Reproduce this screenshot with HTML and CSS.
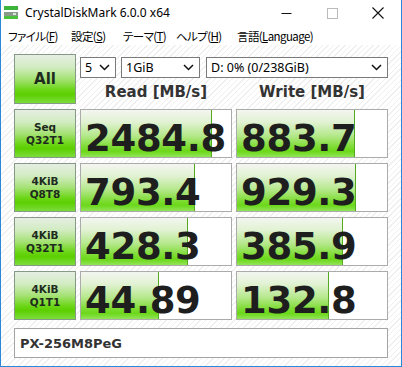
FILE: index.html
```html
<!DOCTYPE html>
<html>
<head>
<meta charset="utf-8">
<link rel="stylesheet" href="styles.css">
</head>
<body>
<div class="window">
  <div class="titlebar">
    <svg class="appicon" width="14" height="13" viewBox="0 0 14 13">
      <rect x="0" y="0" width="14" height="4" fill="#3cb43c"/>
      <rect x="0" y="6" width="14" height="7" fill="#8a9a8a"/>
      <rect x="0" y="10" width="14" height="3" fill="#4cc23c"/>
      <rect x="9" y="7" width="3" height="2" fill="#d8e8d8"/>
    </svg>
    <span class="title">CrystalDiskMark 6.0.0 x64</span>
    <span class="spacer"></span>
    <span class="ctl"><svg width="11" height="11" viewBox="0 0 11 11"><line x1="0.5" y1="5.5" x2="10.5" y2="5.5" stroke="#111" stroke-width="1"/></svg></span>
    <span class="ctl"><svg width="11" height="11" viewBox="0 0 11 11"><rect x="0.5" y="0.5" width="10" height="10" fill="none" stroke="#bbb" stroke-width="1"/></svg></span>
    <span class="ctl"><svg width="12" height="12" viewBox="0 0 12 12"><path d="M0.5 0.5 L11.5 11.5 M11.5 0.5 L0.5 11.5" stroke="#111" stroke-width="1.1"/></svg></span>
  </div>
  <div class="menubar">
    <span class="mi m1">ファイル(<u>F</u>)</span>
    <span class="mi m2">設定(<u>S</u>)</span>
    <span class="mi m3">テーマ(<u>T</u>)</span>
    <span class="mi m4">ヘルプ(<u>H</u>)</span>
    <span class="mi">言語(<u>L</u>anguage)</span>
  </div>
  <div class="content">
    <div class="grid">
      <div class="allbtn">All</div>
      <div class="topctl">
        <div class="selects">
          <div class="sel s1"><span>5</span><svg width="11" height="7" viewBox="0 0 11 7"><polyline points="1,1 5.5,5.5 10,1" fill="none" stroke="#111" stroke-width="1.5"/></svg></div>
          <div class="sel s2"><span>1GiB</span><svg width="11" height="7" viewBox="0 0 11 7"><polyline points="1,1 5.5,5.5 10,1" fill="none" stroke="#111" stroke-width="1.5"/></svg></div>
          <div class="sel s3"><span>D: 0% (0/238GiB)</span><svg width="11" height="7" viewBox="0 0 11 7"><polyline points="1,1 5.5,5.5 10,1" fill="none" stroke="#111" stroke-width="1.5"/></svg></div>
        </div>
        <div class="heads">
          <div class="head">Read [MB/s]</div>
          <div class="head">Write [MB/s]</div>
        </div>
      </div>

      <div class="label">Seq<br>Q32T1</div>
      <div class="result"><div class="fill" style="width:131px"></div><div class="num">2484.8</div></div>
      <div class="result"><div class="fill" style="width:118px"></div><div class="num">883.7</div></div>

      <div class="label">4KiB<br>Q8T8</div>
      <div class="result"><div class="fill" style="width:114px"></div><div class="num">793.4</div></div>
      <div class="result"><div class="fill" style="width:119px"></div><div class="num">929.3</div></div>

      <div class="label">4KiB<br>Q32T1</div>
      <div class="result"><div class="fill" style="width:107px"></div><div class="num">428.3</div></div>
      <div class="result"><div class="fill" style="width:106px"></div><div class="num">385.9</div></div>

      <div class="label">4KiB<br>Q1T1</div>
      <div class="result"><div class="fill" style="width:78px"></div><div class="num">44.89</div></div>
      <div class="result"><div class="fill" style="width:92px"></div><div class="num">132.8</div></div>
    </div>
    <div class="name">PX-256M8PeG</div>
  </div>
</div>
</body>
</html>
```

FILE: styles.css
```css
* { box-sizing: border-box; }
html, body { margin: 0; padding: 0; background: #fff; }

.window {
  width: 402px;
  height: 367px;
  border-left: 1px solid #2b88d8;
  border-right: 1px solid #2b88d8;
  border-bottom: 1px solid #2b88d8;
  display: flex;
  flex-direction: column;
  background: #fff;
  overflow: hidden;
}

.titlebar {
  height: 27px;
  display: flex;
  align-items: center;
  padding-left: 3px;
  font-family: "Noto Sans", "DejaVu Sans", sans-serif;
  font-size: 12px;
  color: #000;
}
.appicon { margin-top: -3px; }
.title { margin-left: 7px; margin-top: -2px; }
.spacer { flex: 1; }
.ctl {
  width: 46px;
  height: 27px;
  display: flex;
  align-items: center;
  justify-content: center;
  padding-bottom: 1px;
}

.menubar {
  height: 18px;
  display: flex;
  align-items: center;
  padding-left: 7px;
  font-family: "Noto Sans CJK JP", "Noto Sans", sans-serif;
  font-size: 11.5px;
  letter-spacing: -0.6px;
  font-feature-settings: "palt";
  color: #000;
  white-space: nowrap;
}
.mi { flex-shrink: 0; }
.mi u { text-decoration: underline; text-underline-offset: 1px; }
.m1 { width: 63px; }
.m2 { width: 52px; }
.m3 { width: 53px; }
.m4 { width: 61px; }

.content {
  flex: 1;
  padding: 9px 0 0 13px;
  background:
    repeating-linear-gradient(135deg, #ffffff 0px, #ffffff 3px, #efefef 3px, #efefef 4px);
}

.grid {
  display: grid;
  grid-template-columns: 62px 152px 152px;
  grid-template-rows: 50px repeat(4, 49px);
  column-gap: 4px;
  row-gap: 5px;
}

.allbtn, .label {
  border: 1px solid #869886;
  background: linear-gradient(to bottom, #e6eee3 0%, #d2ecc2 25%, #a6e276 50%, #6cd618 72%, #5ccf00 82%, #7cdc3c 100%);
  display: flex;
  align-items: center;
  justify-content: center;
  text-align: center;
  font-family: "DejaVu Sans", sans-serif;
  font-weight: bold;
  color: #1e2a1e;
}
.allbtn { font-size: 15px; }
.label { font-size: 10.5px; line-height: 13px; padding-top: 1px; }

.topctl {
  grid-column: 2 / 4;
  display: flex;
  flex-direction: column;
  padding-top: 3px;
}
.selects {
  display: flex;
  height: 21px;
}
.sel {
  height: 21px;
  border: 1px solid #7a7a7a;
  background: #fff;
  display: flex;
  align-items: center;
  justify-content: space-between;
  padding: 0 5px 0 4px;
  font-family: "Noto Sans", "DejaVu Sans", sans-serif;
  font-size: 12.5px;
  color: #000;
}
.sel span { margin-top: -1px; }
.s1 { width: 36px; }
.s2 { width: 79px; margin-left: 5px; }
.s3 { width: 182px; margin-left: 6px; }

.heads {
  flex: 1;
  display: grid;
  grid-template-columns: 152px 152px;
  column-gap: 4px;
  align-items: center;
}
.head {
  text-align: center;
  font-family: "DejaVu Sans", sans-serif;
  font-weight: bold;
  font-size: 15px;
  color: #333;
  padding-top: 2px;
}

.result {
  border: 1px solid #ababab;
  background: #fff;
  display: grid;
  grid-template-columns: 100%;
  grid-template-rows: 100%;
}
.fill {
  grid-area: 1 / 1;
  justify-self: start;
  height: 100%;
  border-right: 1px solid #55aa22;
  background: linear-gradient(to bottom, #f3f6f0 0%, #e2f2d4 25%, #b4e88a 55%, #7edc34 78%, #6cd81a 88%, #92e45a 100%);
}
.num {
  grid-area: 1 / 1;
  align-self: end;
  padding-left: 4px;
  font-family: "DejaVu Sans", sans-serif;
  font-weight: bold;
  font-size: 37px;
  line-height: 37px;
  color: #1e1e1e;
  white-space: nowrap;
  letter-spacing: -0.3px;
}

.name {
  margin-top: 8px;
  width: 374px;
  height: 30px;
  border: 1px solid #a4a4a4;
  background: #fff;
  display: flex;
  align-items: center;
  padding-left: 5px;
  font-family: "DejaVu Sans", sans-serif;
  font-weight: bold;
  font-size: 13px;
  color: #333;
}
```
